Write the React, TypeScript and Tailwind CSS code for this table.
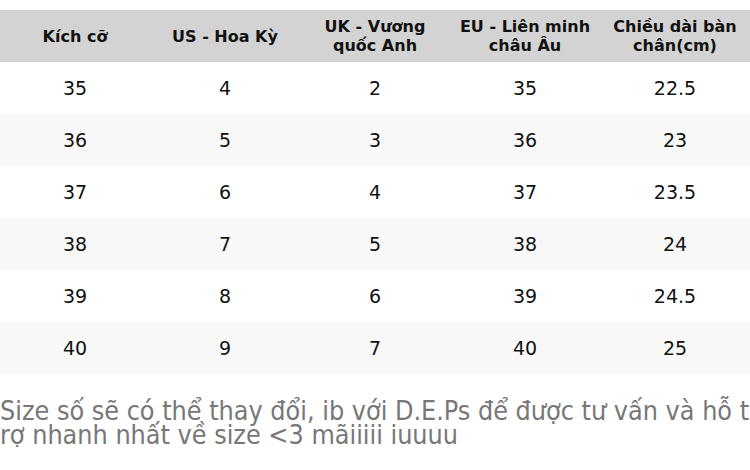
import React from "react";

const rows = [
  ["35", "4", "2", "35", "22.5"],
  ["36", "5", "3", "36", "23"],
  ["37", "6", "4", "37", "23.5"],
  ["38", "7", "5", "38", "24"],
  ["39", "8", "6", "39", "24.5"],
  ["40", "9", "7", "40", "25"],
];

const headers = [
  "Kích cỡ",
  "US - Hoa Kỳ",
  "UK - Vương quốc Anh",
  "EU - Liên minh châu Âu",
  "Chiều dài bàn chân(cm)",
];

export default function App() {
  return (
    <div className="w-[750px] bg-white pt-[10px]" style={{ fontFamily: '"DejaVu Sans", sans-serif' }}>
      <div className="grid grid-cols-5 bg-[#d3d3d3] h-[52px] items-center">
        {headers.map((h) => (
          <div key={h} className="px-2 text-center text-[16px] font-bold leading-[19px] text-[#111]">
            {h}
          </div>
        ))}
      </div>
      {rows.map((r, i) => (
        <div
          key={i}
          className={`grid grid-cols-5 h-[52px] items-center ${i % 2 === 1 ? "bg-[#f8f8f8]" : "bg-white"}`}
        >
          {r.map((c, j) => (
            <div key={j} className="text-center text-[19px] text-[#111]">
              {c}
            </div>
          ))}
        </div>
      ))}
      <p
        className="mt-[25px] w-[750px] text-[26.7px] leading-[24px] text-[#777] break-all"
        style={{ fontFamily: '"DejaVu Sans Condensed", "DejaVu Sans", sans-serif', fontStretch: "condensed" }}
      >
        Size số sẽ có thể thay đổi, ib với D.E.Ps để được tư vấn và hỗ trợ nhanh nhất về size &lt;3 mãiiiii iuuuu
      </p>
    </div>
  );
}
